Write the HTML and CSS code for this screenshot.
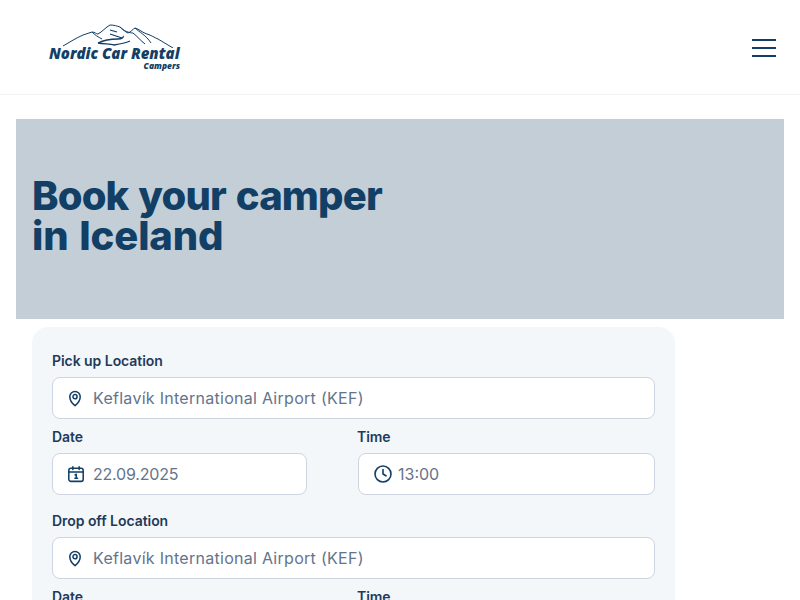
FILE: index.html
```html
<!DOCTYPE html>
<html lang="en">
<head>
<meta charset="utf-8">
<title>Nordic Car Rental Campers</title>
<link rel="stylesheet" href="styles.css">
</head>
<body>
<header class="site-header">
  <a class="logo" href="#">
    <svg class="logo-mark" viewBox="0 0 134 24" width="134" height="24" aria-hidden="true">
      <path class="ln" d="M15 22 C22 18 28 14 35 11 C38 10 41 9 44 8 C47 8 48 10 50 10 C54 8 58 3 62 1 C66 1 69 2 72 3 C75 5 77 8 80 9 C83 8 85 5 87 4 C91 5 95 9 99 10 C103 11 107 14 110 15 C115 18 120 21 125 24"/>
      <path class="ln" d="M44 8 C47 11 50 13 54 15 M72 3 C75 7 82 9 85 9 C89 12 93 17 97 20 M87 4 C91 8 98 11 103 19"/>
      <path class="ln thick" d="M50 19 C56 16 63 15 70 15 C74 15 76 13 75 12 M62 10 L74 14 M50 19 C55 20 62 20 66 21 C72 20 78 19 82 17 M62 6 L69 8"/>
    </svg>
    <span class="logo-name">Nordic Car Rental</span>
    <span class="logo-sub">Campers</span>
  </a>
  <button class="menu" aria-label="Menu"><span></span><span></span><span></span></button>
</header>
<main class="page">
  <section class="hero">
    <h1><span class="line-one">Book your camper</span><br><span class="line-two">in Iceland</span></h1>
  </section>
  <form class="card">
    <div class="field">
      <label class="label">Pick up Location</label>
      <div class="input">
        <svg class="icon pin" viewBox="0 0 20 20"><path d="M10 18.500s-5.800-4.700-5.800-10a5.800 5.800 0 0 1 11.600 0c0 5.300-5.800 10-5.800 10z"/><circle cx="10" cy="8.500" r="2.300"/></svg>
        <span class="place">Keflavík International Airport (KEF)</span>
      </div>
    </div>
    <div class="row">
      <div class="field">
        <label class="label">Date</label>
        <div class="input">
          <svg class="icon" viewBox="0 0 20 20"><rect x="2" y="3.600" width="16" height="14.600" rx="2.400"/><path d="M2 7.800h16M6.500 2v3M13.500 2v3M9 11l1.300-.800v4.600M8.800 14.800h3"/></svg>
          <span class="date">22.09.2025</span>
        </div>
      </div>
      <div class="field">
        <label class="label time-label">Time</label>
        <div class="input">
          <svg class="icon clock" viewBox="1 1 18 18"><circle cx="10" cy="10" r="8"/><path d="M10 5.500V10l3 1.800"/></svg>
          <span>13:00</span>
        </div>
      </div>
    </div>
    <div class="field spaced">
      <label class="label">Drop off Location</label>
      <div class="input">
        <svg class="icon pin" viewBox="0 0 20 20"><path d="M10 18.500s-5.800-4.700-5.800-10a5.800 5.800 0 0 1 11.600 0c0 5.300-5.800 10-5.800 10z"/><circle cx="10" cy="8.500" r="2.300"/></svg>
        <span class="place">Keflavík International Airport (KEF)</span>
      </div>
    </div>
    <div class="row">
      <div class="field">
        <label class="label">Date</label>
        <div class="input">
          <svg class="icon" viewBox="0 0 20 20"><rect x="2" y="3.600" width="16" height="14.600" rx="2.400"/><path d="M2 7.800h16M6.500 2v3M13.500 2v3M9 11l1.300-.800v4.600M8.800 14.800h3"/></svg>
          <span class="date">22.09.2025</span>
        </div>
      </div>
      <div class="field">
        <label class="label time-label">Time</label>
        <div class="input">
          <svg class="icon clock" viewBox="1 1 18 18"><circle cx="10" cy="10" r="8"/><path d="M10 5.500V10l3 1.800"/></svg>
          <span>13:00</span>
        </div>
      </div>
    </div>
  </form>
</main>
</body>
</html>
```
FILE: styles.css
```css
* { box-sizing: border-box; }
html, body { margin: 0; padding: 0; background: #fff; }
body { font-family: Inter, "Liberation Sans", sans-serif; color: #123f66; }

.site-header {
  height: 95px;
  border-bottom: 1px solid #f1f3f5;
  display: flex;
  align-items: center;
  justify-content: space-between;
  padding: 0 24px 0 48px;
}
.logo {
  display: flex;
  flex-direction: column;
  align-items: flex-end;
  width: 134px;
  text-decoration: none;
  color: #123f66;
}
.logo-mark { display: block; margin-bottom: -2px; }
.ln { fill: none; stroke: #123f66; stroke-width: 1; }
.thick { stroke-width: 1.300; }
.logo-name {
  width: 100%;
  padding-left: 1px;
  font-family: "Open Sans", sans-serif;
  font-weight: 800;
  font-style: italic;
  font-size: 15px;
  line-height: 15px;
  white-space: nowrap;
}
.logo-sub {
  padding-right: 2px;
  font-family: "Open Sans", sans-serif;
  font-weight: 800;
  font-style: italic;
  font-size: 8.500px;
  line-height: 10px;
}
.menu {
  width: 24px;
  display: flex;
  flex-direction: column;
  gap: 6px;
  margin-top: 2px;
  padding: 0;
  border: 0;
  background: none;
}
.menu span { display: block; height: 2px; background: #123f66; }

.page { padding: 24px 16px 0; }
.hero {
  height: 200px;
  background: #c4ced7;
  padding: 57px 16px 0;
}
h1 {
  margin: 0;
  font-size: 40px;
  line-height: 40px;
  font-weight: 800;
  word-spacing: 2px;
  color: #123f66;
}
.line-one { letter-spacing: -.85px; }
.line-two { letter-spacing: -.1px; }
.card {
  width: 643px;
  margin: 8px 0 0 16px;
  padding: 24px 20px;
  background: #f4f7fa;
  border-radius: 16px;
  display: flex;
  flex-direction: column;
  gap: 8px;
}
.card > .spaced { margin-top: 8px; }
.row {
  display: grid;
  grid-template-columns: 255px 297px;
  column-gap: 51px;
}
.label {
  display: block;
  font-size: 14px;
  line-height: 20px;
  font-weight: 600;
  letter-spacing: -.05px;
  color: #1f3a5a;
  margin-bottom: 6px;
}
.time-label { margin-left: -1px; }
.input {
  height: 42px;
  background: #fff;
  border: 1px solid #ccd5e1;
  border-radius: 8px;
  display: flex;
  align-items: center;
  gap: 8px;
  padding: 0 14px;
  font-size: 16px;
  color: #64748b;
  white-space: nowrap;
}
.place { letter-spacing: .28px; }
.date { letter-spacing: -.2px; }
.icon {
  width: 18px;
  height: 18px;
  flex: none;
  fill: none;
  stroke: #123f66;
  stroke-width: 1.700;
  stroke-linecap: round;
  stroke-linejoin: round;
}
.pin { margin: 0 1px 0 -1px; }
.clock { stroke-width: 1.600; margin: 0 -2px 0 1px; }
```
